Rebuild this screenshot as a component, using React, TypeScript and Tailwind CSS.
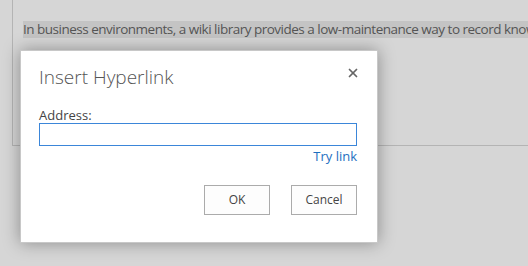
import { X } from "lucide-react";

const font = { fontFamily: '"Open Sans", "Noto Sans", sans-serif' };

export default function App() {
  return (
    <div className="relative h-[266px] w-[528px] overflow-hidden bg-[#d6d6d6]" style={font}>
      <div className="ml-[12px] h-[146px] overflow-hidden border-b border-l border-[#b4b4b4] pt-[16px] pl-[10px]">
        <p className="inline-block whitespace-nowrap bg-[#c4c4c4] text-[13.5px] leading-[17px] tracking-[-0.5px] text-[#555]">
          In business environments, a wiki library provides a low-maintenance way to record know
        </p>
      </div>

      <div className="absolute left-[20px] top-[50px] flex h-[193px] w-[358px] flex-col border border-[#c8c8c8] bg-white pl-[18px] pr-[20px] shadow-[0_0_16px_rgba(0,0,0,0.35)]">
        <div className="flex items-start justify-between pt-[13px]">
          <h2 className="text-[19px] font-light leading-[26px] text-[#555]">Insert Hyperlink</h2>
          <button className="mt-[2px] mr-[-3px] text-[#666]">
            <X size={14} strokeWidth={3} />
          </button>
        </div>
        <label className="mt-[17px] text-[13px] leading-[16px] text-[#444]">Address:</label>
        <input className="h-[23px] w-full border border-solid border-[#3b86d9] bg-white outline-none" />
        <a className="mt-[2px] self-end text-[13px] leading-[17px] text-[#1e6fbf]">Try link</a>
        <div className="mt-[20px] flex justify-end gap-[21px]">
          <button className="h-[30px] w-[66px] border border-[#ababab] bg-[#fdfdfd] text-[12px] text-[#444]">OK</button>
          <button className="h-[30px] w-[66px] border border-[#ababab] bg-[#fdfdfd] text-[12px] text-[#444]">Cancel</button>
        </div>
      </div>
    </div>
  );
}
